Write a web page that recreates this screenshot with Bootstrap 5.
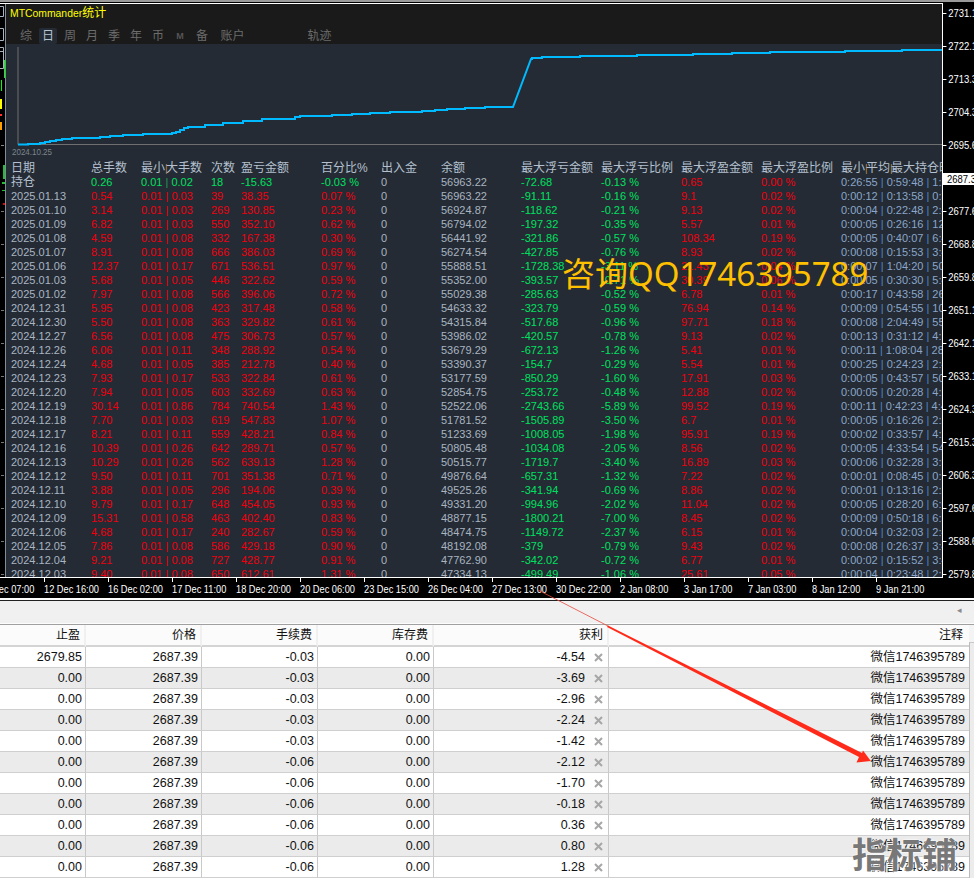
<!DOCTYPE html>
<html lang="zh">
<head>
<meta charset="utf-8">
<title>MTCommander统计</title>
<link href="https://cdn.jsdelivr.net/npm/bootstrap@5.3.0/dist/css/bootstrap.min.css" rel="stylesheet">
<style>
html,body{margin:0;height:878px;overflow:hidden;background:#000}
body{font-family:"Liberation Sans","Noto Sans CJK SC",sans-serif;width:974px;position:relative}
.topline{height:3px;background:#000;border-top:2px solid #9a9a9a}
.chart-row{height:575px}
.plot{width:943px;border-top:1px solid #fff;border-right:1px solid #fff;border-bottom:1px solid #fff;min-width:0}
.strip{width:5px;flex:none;background:#000;overflow:hidden}
.panel{width:937px;border-left:1px solid #7f8c9a;background:#242b34;min-width:0}
.titlebar{height:40px;background:#1a1a1a;padding:2px 0 0 4px;flex:none}
.ttl{color:#ff0;font-size:10.4px;line-height:15px;height:22px}
.ttl span{font-size:12px}
.tabbar{padding-left:5px;color:#6c6c6c;font-size:12px;line-height:16px;height:16px}
.tabx{width:22px;text-align:center;flex:none}
.tabx.on{background:#242b34;color:#b9c4d2;width:18px;margin:0 2px;border-radius:2px}
.tabx.mm{font-size:9px;font-weight:700;color:#555}
.tabx.wide{width:25px;margin-left:7px;margin-right:62px;white-space:nowrap}
.tabx.wide2{width:25px;white-space:nowrap}
.curve{height:117px;flex:none;display:block}
.tblwrap{flex:1;overflow:hidden;min-height:0}
.stat-tbl{table-layout:fixed;width:936px;margin:0;--bs-table-bg:transparent;border-collapse:separate;border-spacing:0}
.stat-tbl td,.stat-tbl th{padding:0;height:14px;line-height:14px;font-size:11px;white-space:nowrap;overflow:hidden;border:0;background:transparent;box-shadow:none;color:#a9b4c0;font-weight:400}
.stat-tbl th{font-size:12px;color:#b4c0cf;line-height:13px}
.stat-tbl td:first-child,.stat-tbl th:first-child{padding-left:5px}
.stat-tbl tbody td:first-child{color:#aab5c2}
.stat-tbl tbody tr.cur td:first-child{font-size:12px;color:#b4c0cf}
.stat-tbl td.rd{color:#f0000f}
.stat-tbl td.gr{color:#00e060}
.stat-tbl td.tm{color:#8ba6c9}
.sep{color:#4f86c6}
.stat-tbl td.rd .sep{color:#f0000f}
.stat-tbl td.gr .sep{color:#1f9e55}
.hsep{color:#b08a50;display:inline-block;width:1px;font-size:10px}
.axis{width:31px;flex:none;color:#fff;font-size:11px;overflow:hidden;margin-top:-4px;position:relative;height:579px}
.pr{height:33px;line-height:33px;padding-left:6px;position:relative;white-space:nowrap;transform:scaleX(.86);transform-origin:left center}
.pr::before{content:"";position:absolute;left:0;top:16px;width:4px;height:1px;background:#fff}
.pr.none::before{display:none}
.nowpr{position:absolute;left:0;top:174px;width:31px;height:12px;background:#fff;color:#000;font-size:11px;line-height:12px;padding-left:4px;white-space:nowrap;overflow:hidden}
.nowpr span{display:inline-block;transform:scaleX(.86);transform-origin:left center}
.timeline{height:20px;overflow:hidden;color:#fff;font-size:11px;line-height:20px;padding-top:1px;margin-left:-20px;width:994px}
.tick{width:64px;flex:none;position:relative;white-space:nowrap;line-height:14px;padding-top:3px}
.tick::before{content:"";position:absolute;left:0;top:-1px;width:1px;height:4px;background:#fff}
.tick span{display:inline-block;transform:scaleX(.84);transform-origin:left center}
.wline{height:2px;background:#fff}
.bline{height:1px;background:#222}
.toolbar{height:23px;background:#f0f0f0;border-bottom:1px solid #fcfcfc;padding-right:12px;color:#8a8a8a;font-size:9px;line-height:18px;text-align:right;flex:none}
.gline{height:1px;background:#a0a0a0}
.lower{background:#f0f0f0;height:253px}
.order-tbl{table-layout:fixed;width:969px;margin:0;border-collapse:separate;border-spacing:0;flex:none}
.order-tbl th,.order-tbl td{height:21px;padding:0 3px;font-size:12.5px;line-height:20px;text-align:right;color:#111;white-space:nowrap;overflow:hidden;border:0;border-right:1px solid #c9c9c9;border-bottom:1px solid #cfcfcf;background:#fff;box-shadow:none;font-weight:400}
.order-tbl th{font-size:12px;background:#fbfbfb;border-right:2px solid #f0f0f0;border-bottom:2px solid #d4d4d4;padding-right:4px;height:22px}
.order-tbl th:last-child,.order-tbl td:last-child{border-right:0;padding-right:4px}
.order-tbl th:last-child{padding-right:6px}
.order-tbl tbody tr:nth-child(even) td{background:#ebebeb}
.order-tbl td.pf{padding-right:5px}
.xic{width:9px;height:9px;margin-left:9px;vertical-align:-1px}
.sbar{flex:1;background:#f4f4f4}
.sbar-thumb{margin-top:17px;height:236px;background:#ececec;border-left:1px solid #bcbcbc;border-top:1px solid #c8c8c8}
.qqmark{position:absolute;left:562px;top:249px;font-size:33px;line-height:50px;color:#ffc000;font-family:"Noto Sans","Noto Sans CJK SC",sans-serif;white-space:nowrap}
.brandmark{position:absolute;left:852px;top:832px;font-size:35px;line-height:42px;font-weight:700;color:#787878;font-family:"Noto Sans CJK SC",sans-serif;white-space:nowrap;text-shadow:0 0 2px #fff,0 0 2px #fff}
.arrowlay{position:absolute;left:0;top:0;width:974px;height:878px;pointer-events:none}
</style>
</head>
<body>
<div class="topline"></div>
<div class="d-flex chart-row">
  <div class="plot d-flex">
    <div class="strip">
      <svg width="5" height="573" viewBox="0 0 5 573" class="d-block">
        <g fill="none" stroke="#aab4c0"><path d="M-1 2.5H3.5V12.5H-1M-1 24.5H3.5V36.5H-1M-1 43.5H3.5V64.5H-1M-1 47.5H3.5"/></g>
        <rect x="4" y="56" width="1" height="18" fill="#00ff00"/>
        <rect x="1" y="76" width="1" height="11" fill="#00ff00"/>
        <rect x="0" y="95" width="2" height="10" fill="#ffff00"/>
        <rect x="0" y="110" width="2" height="2" fill="#ff3030"/>
        <rect x="0" y="118" width="2" height="8" fill="#ffa000"/>
        <rect x="1" y="141" width="3" height="1" fill="#888"/>
        <rect x="3" y="161" width="2" height="14" fill="#20c030"/>
        <rect x="2" y="178" width="3" height="2" fill="#20c030"/>
        <rect x="2" y="186" width="3" height="1" fill="#20c030"/>
        <rect x="3" y="199" width="2" height="2" fill="#f00000"/>
        <g fill="#777"><rect x="1" y="207" width="3" height="1"/><rect x="1" y="240" width="3" height="1"/><rect x="1" y="273" width="3" height="1"/><rect x="1" y="306" width="3" height="1"/><rect x="1" y="339" width="3" height="1"/><rect x="1" y="372" width="3" height="1"/><rect x="1" y="405" width="3" height="1"/><rect x="1" y="438" width="3" height="1"/><rect x="1" y="471" width="3" height="1"/><rect x="1" y="504" width="3" height="1"/><rect x="1" y="537" width="3" height="1"/><rect x="1" y="570" width="3" height="1"/></g>
      </svg>
    </div>
    <div class="panel d-flex flex-column">
      <div class="titlebar">
        <div class="ttl">MTCommander<span>统计</span></div>
        <div class="tabbar d-flex">
          <span class="tabx">综</span><span class="tabx on">日</span><span class="tabx">周</span><span class="tabx">月</span><span class="tabx">季</span><span class="tabx">年</span><span class="tabx">币</span><span class="tabx mm">M</span><span class="tabx">备</span><span class="tabx wide">账户</span><span class="tabx wide2">轨迹</span>
        </div>
      </div>
      <svg class="curve" width="936" height="117" viewBox="6 44 936 117">
        <path d="M18 47V144.5H942" fill="none" stroke="#6f6f6f" stroke-width="1"/>
        <path d="M18 144.5H28V144H40V143H45V142H50V141H56V140H62V139H72V138H100V137H110V136H123V135H143V134H172V133H176V132H180V130H184V128H188V127H205V125H223V123H243V121H262V119H295V117H300V116H332V115H352V114H370V113H390V112H422V111H435V110H447V109H465V108H485V107H513L531 59H532V58H542V57H580V56H637V55H693V54H732V53H770V52H845V51H902V50H942" fill="none" stroke="#00baff" stroke-width="2"/>
        <text x="12" y="155" fill="#7d858e" font-size="9.5" font-family="Liberation Sans" textLength="40" lengthAdjust="spacingAndGlyphs">2024.10.25</text>
      </svg>
      <div class="tblwrap">
        <table class="table stat-tbl">
          <colgroup><col style="width:85px"><col style="width:50px"><col style="width:70px"><col style="width:30px"><col style="width:80px"><col style="width:60px"><col style="width:60px"><col style="width:80px"><col style="width:80px"><col style="width:80px"><col style="width:80px"><col style="width:80px"><col style="width:101px"></colgroup>
          <thead><tr><th>日期</th><th>总手数</th><th>最小<span class="hsep">|</span>大手数</th><th>次数</th><th>盈亏金额</th><th>百分比%</th><th>出入金</th><th>余额</th><th>最大浮亏金额</th><th>最大浮亏比例</th><th>最大浮盈金额</th><th>最大浮盈比例</th><th>最小<span class="hsep">|</span>平均<span class="hsep">|</span>最大持仓时间</th></tr></thead>
          <tbody>
<tr class="cur"><td>持仓</td><td class="gr">0.26</td><td class="gr">0.01 <span class="sep">|</span> 0.02</td><td class="gr">18</td><td class="gr">-15.63</td><td class="gr">-0.03 %</td><td>0</td><td>56963.22</td><td class="gr">-72.68</td><td class="gr">-0.13 %</td><td class="rd">0.65</td><td class="rd">0.00 %</td><td class="tm">0:26:55 <span class="sep">|</span> 0:59:48 <span class="sep">|</span> 1:2</td></tr>
<tr><td>2025.01.13</td><td class="rd">0.54</td><td class="rd">0.01 <span class="sep">|</span> 0.03</td><td class="rd">39</td><td class="rd">38.35</td><td class="rd">0.07 %</td><td>0</td><td>56963.22</td><td class="gr">-91.11</td><td class="gr">-0.16 %</td><td class="rd">9.1</td><td class="rd">0.02 %</td><td class="tm">0:00:12 <span class="sep">|</span> 0:13:58 <span class="sep">|</span> 0:3</td></tr>
<tr><td>2025.01.10</td><td class="rd">3.14</td><td class="rd">0.01 <span class="sep">|</span> 0.03</td><td class="rd">269</td><td class="rd">130.85</td><td class="rd">0.23 %</td><td>0</td><td>56924.87</td><td class="gr">-118.62</td><td class="gr">-0.21 %</td><td class="rd">9.13</td><td class="rd">0.02 %</td><td class="tm">0:00:04 <span class="sep">|</span> 0:22:48 <span class="sep">|</span> 2:4</td></tr>
<tr><td>2025.01.09</td><td class="rd">6.82</td><td class="rd">0.01 <span class="sep">|</span> 0.03</td><td class="rd">550</td><td class="rd">352.10</td><td class="rd">0.62 %</td><td>0</td><td>56794.02</td><td class="gr">-197.32</td><td class="gr">-0.35 %</td><td class="rd">5.57</td><td class="rd">0.01 %</td><td class="tm">0:00:05 <span class="sep">|</span> 0:26:16 <span class="sep">|</span> 12</td></tr>
<tr><td>2025.01.08</td><td class="rd">4.59</td><td class="rd">0.01 <span class="sep">|</span> 0.08</td><td class="rd">332</td><td class="rd">167.38</td><td class="rd">0.30 %</td><td>0</td><td>56441.92</td><td class="gr">-321.86</td><td class="gr">-0.57 %</td><td class="rd">108.34</td><td class="rd">0.19 %</td><td class="tm">0:00:05 <span class="sep">|</span> 0:40:07 <span class="sep">|</span> 6:4</td></tr>
<tr><td>2025.01.07</td><td class="rd">8.91</td><td class="rd">0.01 <span class="sep">|</span> 0.08</td><td class="rd">666</td><td class="rd">386.03</td><td class="rd">0.69 %</td><td>0</td><td>56274.54</td><td class="gr">-427.85</td><td class="gr">-0.76 %</td><td class="rd">8.93</td><td class="rd">0.02 %</td><td class="tm">0:00:08 <span class="sep">|</span> 0:15:53 <span class="sep">|</span> 3:4</td></tr>
<tr><td>2025.01.06</td><td class="rd">12.37</td><td class="rd">0.01 <span class="sep">|</span> 0.17</td><td class="rd">671</td><td class="rd">536.51</td><td class="rd">0.97 %</td><td>0</td><td>55888.51</td><td class="gr">-1728.38</td><td class="gr">-3.11 %</td><td class="rd">21.43</td><td class="rd">0.04 %</td><td class="tm">0:00:07 <span class="sep">|</span> 1:04:20 <span class="sep">|</span> 50</td></tr>
<tr><td>2025.01.03</td><td class="rd">5.68</td><td class="rd">0.01 <span class="sep">|</span> 0.05</td><td class="rd">446</td><td class="rd">322.62</td><td class="rd">0.59 %</td><td>0</td><td>55352.00</td><td class="gr">-393.57</td><td class="gr">-0.71 %</td><td class="rd">30.39</td><td class="rd">0.06 %</td><td class="tm">0:00:05 <span class="sep">|</span> 0:30:30 <span class="sep">|</span> 5:4</td></tr>
<tr><td>2025.01.02</td><td class="rd">7.97</td><td class="rd">0.01 <span class="sep">|</span> 0.08</td><td class="rd">566</td><td class="rd">396.06</td><td class="rd">0.72 %</td><td>0</td><td>55029.38</td><td class="gr">-285.63</td><td class="gr">-0.52 %</td><td class="rd">6.78</td><td class="rd">0.01 %</td><td class="tm">0:00:17 <span class="sep">|</span> 0:43:58 <span class="sep">|</span> 26</td></tr>
<tr><td>2024.12.31</td><td class="rd">5.95</td><td class="rd">0.01 <span class="sep">|</span> 0.08</td><td class="rd">423</td><td class="rd">317.48</td><td class="rd">0.58 %</td><td>0</td><td>54633.32</td><td class="gr">-323.79</td><td class="gr">-0.59 %</td><td class="rd">76.94</td><td class="rd">0.14 %</td><td class="tm">0:00:09 <span class="sep">|</span> 0:54:55 <span class="sep">|</span> 10</td></tr>
<tr><td>2024.12.30</td><td class="rd">5.50</td><td class="rd">0.01 <span class="sep">|</span> 0.08</td><td class="rd">363</td><td class="rd">329.82</td><td class="rd">0.61 %</td><td>0</td><td>54315.84</td><td class="gr">-517.68</td><td class="gr">-0.96 %</td><td class="rd">97.71</td><td class="rd">0.18 %</td><td class="tm">0:00:08 <span class="sep">|</span> 2:04:49 <span class="sep">|</span> 55</td></tr>
<tr><td>2024.12.27</td><td class="rd">6.56</td><td class="rd">0.01 <span class="sep">|</span> 0.08</td><td class="rd">475</td><td class="rd">306.73</td><td class="rd">0.57 %</td><td>0</td><td>53986.02</td><td class="gr">-420.57</td><td class="gr">-0.78 %</td><td class="rd">9.13</td><td class="rd">0.02 %</td><td class="tm">0:00:13 <span class="sep">|</span> 0:31:12 <span class="sep">|</span> 4:1</td></tr>
<tr><td>2024.12.26</td><td class="rd">6.06</td><td class="rd">0.01 <span class="sep">|</span> 0.11</td><td class="rd">348</td><td class="rd">288.92</td><td class="rd">0.54 %</td><td>0</td><td>53679.29</td><td class="gr">-672.13</td><td class="gr">-1.26 %</td><td class="rd">5.41</td><td class="rd">0.01 %</td><td class="tm">0:00:11 <span class="sep">|</span> 1:08:04 <span class="sep">|</span> 28</td></tr>
<tr><td>2024.12.24</td><td class="rd">4.68</td><td class="rd">0.01 <span class="sep">|</span> 0.05</td><td class="rd">385</td><td class="rd">212.78</td><td class="rd">0.40 %</td><td>0</td><td>53390.37</td><td class="gr">-154.7</td><td class="gr">-0.29 %</td><td class="rd">5.54</td><td class="rd">0.01 %</td><td class="tm">0:00:25 <span class="sep">|</span> 0:24:23 <span class="sep">|</span> 2:4</td></tr>
<tr><td>2024.12.23</td><td class="rd">7.93</td><td class="rd">0.01 <span class="sep">|</span> 0.17</td><td class="rd">533</td><td class="rd">322.84</td><td class="rd">0.61 %</td><td>0</td><td>53177.59</td><td class="gr">-850.29</td><td class="gr">-1.60 %</td><td class="rd">17.91</td><td class="rd">0.03 %</td><td class="tm">0:00:05 <span class="sep">|</span> 0:43:57 <span class="sep">|</span> 50</td></tr>
<tr><td>2024.12.20</td><td class="rd">7.94</td><td class="rd">0.01 <span class="sep">|</span> 0.05</td><td class="rd">603</td><td class="rd">332.69</td><td class="rd">0.63 %</td><td>0</td><td>52854.75</td><td class="gr">-253.72</td><td class="gr">-0.48 %</td><td class="rd">12.88</td><td class="rd">0.02 %</td><td class="tm">0:00:05 <span class="sep">|</span> 0:20:28 <span class="sep">|</span> 4:2</td></tr>
<tr><td>2024.12.19</td><td class="rd">30.14</td><td class="rd">0.01 <span class="sep">|</span> 0.86</td><td class="rd">784</td><td class="rd">740.54</td><td class="rd">1.43 %</td><td>0</td><td>52522.06</td><td class="gr">-2743.66</td><td class="gr">-5.89 %</td><td class="rd">99.52</td><td class="rd">0.19 %</td><td class="tm">0:00:11 <span class="sep">|</span> 0:42:23 <span class="sep">|</span> 4:4</td></tr>
<tr><td>2024.12.18</td><td class="rd">7.70</td><td class="rd">0.01 <span class="sep">|</span> 0.03</td><td class="rd">619</td><td class="rd">547.83</td><td class="rd">1.07 %</td><td>0</td><td>51781.52</td><td class="gr">-1505.89</td><td class="gr">-3.50 %</td><td class="rd">6.7</td><td class="rd">0.01 %</td><td class="tm">0:00:05 <span class="sep">|</span> 0:16:26 <span class="sep">|</span> 2:2</td></tr>
<tr><td>2024.12.17</td><td class="rd">8.21</td><td class="rd">0.01 <span class="sep">|</span> 0.11</td><td class="rd">559</td><td class="rd">428.21</td><td class="rd">0.84 %</td><td>0</td><td>51233.69</td><td class="gr">-1008.05</td><td class="gr">-1.98 %</td><td class="rd">95.91</td><td class="rd">0.19 %</td><td class="tm">0:00:02 <span class="sep">|</span> 0:33:57 <span class="sep">|</span> 4:2</td></tr>
<tr><td>2024.12.16</td><td class="rd">10.39</td><td class="rd">0.01 <span class="sep">|</span> 0.26</td><td class="rd">642</td><td class="rd">289.71</td><td class="rd">0.57 %</td><td>0</td><td>50805.48</td><td class="gr">-1034.08</td><td class="gr">-2.05 %</td><td class="rd">8.56</td><td class="rd">0.02 %</td><td class="tm">0:00:05 <span class="sep">|</span> 4:33:54 <span class="sep">|</span> 54</td></tr>
<tr><td>2024.12.13</td><td class="rd">10.29</td><td class="rd">0.01 <span class="sep">|</span> 0.26</td><td class="rd">562</td><td class="rd">639.13</td><td class="rd">1.28 %</td><td>0</td><td>50515.77</td><td class="gr">-1719.7</td><td class="gr">-3.40 %</td><td class="rd">16.89</td><td class="rd">0.03 %</td><td class="tm">0:00:06 <span class="sep">|</span> 0:32:28 <span class="sep">|</span> 3:3</td></tr>
<tr><td>2024.12.12</td><td class="rd">9.50</td><td class="rd">0.01 <span class="sep">|</span> 0.11</td><td class="rd">701</td><td class="rd">351.38</td><td class="rd">0.71 %</td><td>0</td><td>49876.64</td><td class="gr">-657.31</td><td class="gr">-1.32 %</td><td class="rd">7.22</td><td class="rd">0.02 %</td><td class="tm">0:00:01 <span class="sep">|</span> 0:08:45 <span class="sep">|</span> 0:5</td></tr>
<tr><td>2024.12.11</td><td class="rd">3.88</td><td class="rd">0.01 <span class="sep">|</span> 0.05</td><td class="rd">296</td><td class="rd">194.06</td><td class="rd">0.39 %</td><td>0</td><td>49525.26</td><td class="gr">-341.94</td><td class="gr">-0.69 %</td><td class="rd">8.86</td><td class="rd">0.02 %</td><td class="tm">0:00:01 <span class="sep">|</span> 0:13:16 <span class="sep">|</span> 2:2</td></tr>
<tr><td>2024.12.10</td><td class="rd">9.79</td><td class="rd">0.01 <span class="sep">|</span> 0.17</td><td class="rd">648</td><td class="rd">454.05</td><td class="rd">0.93 %</td><td>0</td><td>49331.20</td><td class="gr">-994.96</td><td class="gr">-2.02 %</td><td class="rd">11.04</td><td class="rd">0.02 %</td><td class="tm">0:00:05 <span class="sep">|</span> 0:28:20 <span class="sep">|</span> 6:0</td></tr>
<tr><td>2024.12.09</td><td class="rd">15.31</td><td class="rd">0.01 <span class="sep">|</span> 0.58</td><td class="rd">463</td><td class="rd">402.40</td><td class="rd">0.83 %</td><td>0</td><td>48877.15</td><td class="gr">-1800.21</td><td class="gr">-7.00 %</td><td class="rd">8.45</td><td class="rd">0.02 %</td><td class="tm">0:00:09 <span class="sep">|</span> 0:50:18 <span class="sep">|</span> 6:5</td></tr>
<tr><td>2024.12.06</td><td class="rd">4.68</td><td class="rd">0.01 <span class="sep">|</span> 0.17</td><td class="rd">240</td><td class="rd">282.67</td><td class="rd">0.59 %</td><td>0</td><td>48474.75</td><td class="gr">-1149.72</td><td class="gr">-2.37 %</td><td class="rd">6.15</td><td class="rd">0.01 %</td><td class="tm">0:00:04 <span class="sep">|</span> 0:32:03 <span class="sep">|</span> 2:4</td></tr>
<tr><td>2024.12.05</td><td class="rd">7.86</td><td class="rd">0.01 <span class="sep">|</span> 0.08</td><td class="rd">586</td><td class="rd">429.18</td><td class="rd">0.90 %</td><td>0</td><td>48192.08</td><td class="gr">-379</td><td class="gr">-0.79 %</td><td class="rd">9.43</td><td class="rd">0.02 %</td><td class="tm">0:00:08 <span class="sep">|</span> 0:26:37 <span class="sep">|</span> 3:4</td></tr>
<tr><td>2024.12.04</td><td class="rd">9.21</td><td class="rd">0.01 <span class="sep">|</span> 0.08</td><td class="rd">727</td><td class="rd">428.77</td><td class="rd">0.91 %</td><td>0</td><td>47762.90</td><td class="gr">-342.02</td><td class="gr">-0.72 %</td><td class="rd">6.77</td><td class="rd">0.01 %</td><td class="tm">0:00:02 <span class="sep">|</span> 0:15:52 <span class="sep">|</span> 3:4</td></tr>
<tr><td>2024.12.03</td><td class="rd">9.40</td><td class="rd">0.01 <span class="sep">|</span> 0.08</td><td class="rd">650</td><td class="rd">612.61</td><td class="rd">1.31 %</td><td>0</td><td>47334.13</td><td class="gr">-499.49</td><td class="gr">-1.06 %</td><td class="rd">25.61</td><td class="rd">0.05 %</td><td class="tm">0:00:04 <span class="sep">|</span> 0:23:48 <span class="sep">|</span> 2:5</td></tr>
          </tbody>
        </table>
      </div>
    </div>
  </div>
  <div class="axis">
    <div class="pr" style="margin-top:-2px">2731.15</div><div class="pr">2722.15</div><div class="pr">2713.35</div><div class="pr">2704.35</div><div class="pr">2695.65</div><div class="pr none"></div><div class="pr">2677.65</div><div class="pr">2668.85</div><div class="pr">2659.85</div><div class="pr">2651.15</div><div class="pr">2642.15</div><div class="pr">2633.15</div><div class="pr">2624.35</div><div class="pr">2615.35</div><div class="pr">2606.35</div><div class="pr">2597.65</div><div class="pr">2588.65</div><div class="pr">2579.85</div>
    <div class="nowpr"><span>2687.39</span></div>
  </div>
</div>
<div class="timeline d-flex">
  <div class="tick"><span>11 Dec 07:00</span></div><div class="tick"><span>12 Dec 16:00</span></div><div class="tick"><span>16 Dec 02:00</span></div><div class="tick"><span>17 Dec 11:00</span></div><div class="tick"><span>18 Dec 20:00</span></div><div class="tick"><span>20 Dec 06:00</span></div><div class="tick"><span>23 Dec 15:00</span></div><div class="tick"><span>26 Dec 04:00</span></div><div class="tick"><span>27 Dec 13:00</span></div><div class="tick"><span>30 Dec 22:00</span></div><div class="tick"><span>2 Jan 08:00</span></div><div class="tick"><span>3 Jan 17:00</span></div><div class="tick"><span>7 Jan 03:00</span></div><div class="tick"><span>8 Jan 12:00</span></div><div class="tick"><span>9 Jan 21:00</span></div>
</div>
<div class="wline"></div>
<div class="bline"></div>
<div class="toolbar">◂</div>
<div class="gline"></div>
<div class="lower d-flex">
  <table class="table order-tbl">
    <colgroup><col style="width:86px"><col style="width:116px"><col style="width:116px"><col style="width:116px"><col style="width:175px"><col style="width:360px"></colgroup>
    <thead><tr><th>止盈</th><th>价格</th><th>手续费</th><th>库存费</th><th>获利</th><th>注释</th></tr></thead>
    <tbody>
<tr><td>2679.85</td><td>2687.39</td><td>-0.03</td><td>0.00</td><td class="pf">-4.54<svg class="xic" viewBox="0 0 9 9"><path d="M1 1L8 8M8 1L1 8" stroke="#a6a6a6" stroke-width="2"/></svg></td><td>微信1746395789</td></tr>
<tr><td>0.00</td><td>2687.39</td><td>-0.03</td><td>0.00</td><td class="pf">-3.69<svg class="xic" viewBox="0 0 9 9"><path d="M1 1L8 8M8 1L1 8" stroke="#a6a6a6" stroke-width="2"/></svg></td><td>微信1746395789</td></tr>
<tr><td>0.00</td><td>2687.39</td><td>-0.03</td><td>0.00</td><td class="pf">-2.96<svg class="xic" viewBox="0 0 9 9"><path d="M1 1L8 8M8 1L1 8" stroke="#a6a6a6" stroke-width="2"/></svg></td><td>微信1746395789</td></tr>
<tr><td>0.00</td><td>2687.39</td><td>-0.03</td><td>0.00</td><td class="pf">-2.24<svg class="xic" viewBox="0 0 9 9"><path d="M1 1L8 8M8 1L1 8" stroke="#a6a6a6" stroke-width="2"/></svg></td><td>微信1746395789</td></tr>
<tr><td>0.00</td><td>2687.39</td><td>-0.03</td><td>0.00</td><td class="pf">-1.42<svg class="xic" viewBox="0 0 9 9"><path d="M1 1L8 8M8 1L1 8" stroke="#a6a6a6" stroke-width="2"/></svg></td><td>微信1746395789</td></tr>
<tr><td>0.00</td><td>2687.39</td><td>-0.06</td><td>0.00</td><td class="pf">-2.12<svg class="xic" viewBox="0 0 9 9"><path d="M1 1L8 8M8 1L1 8" stroke="#a6a6a6" stroke-width="2"/></svg></td><td>微信1746395789</td></tr>
<tr><td>0.00</td><td>2687.39</td><td>-0.06</td><td>0.00</td><td class="pf">-1.70<svg class="xic" viewBox="0 0 9 9"><path d="M1 1L8 8M8 1L1 8" stroke="#a6a6a6" stroke-width="2"/></svg></td><td>微信1746395789</td></tr>
<tr><td>0.00</td><td>2687.39</td><td>-0.06</td><td>0.00</td><td class="pf">-0.18<svg class="xic" viewBox="0 0 9 9"><path d="M1 1L8 8M8 1L1 8" stroke="#a6a6a6" stroke-width="2"/></svg></td><td>微信1746395789</td></tr>
<tr><td>0.00</td><td>2687.39</td><td>-0.06</td><td>0.00</td><td class="pf">0.36<svg class="xic" viewBox="0 0 9 9"><path d="M1 1L8 8M8 1L1 8" stroke="#a6a6a6" stroke-width="2"/></svg></td><td>微信1746395789</td></tr>
<tr><td>0.00</td><td>2687.39</td><td>-0.06</td><td>0.00</td><td class="pf">0.80<svg class="xic" viewBox="0 0 9 9"><path d="M1 1L8 8M8 1L1 8" stroke="#a6a6a6" stroke-width="2"/></svg></td><td>微信1746395789</td></tr>
<tr><td>0.00</td><td>2687.39</td><td>-0.06</td><td>0.00</td><td class="pf">1.28<svg class="xic" viewBox="0 0 9 9"><path d="M1 1L8 8M8 1L1 8" stroke="#a6a6a6" stroke-width="2"/></svg></td><td>微信1746395789</td></tr>
    </tbody>
  </table>
  <div class="sbar"><div class="sbar-thumb"></div></div>
</div>
<div class="qqmark">咨询QQ1746395789</div>
<svg class="arrowlay" viewBox="0 0 974 878">
  <path d="M538 590L608 626" stroke="#e8473c" stroke-width=".8" fill="none"/>
  <polygon points="608,625.6 862,753 863,750.5 870.8,761 856.5,762.5 859,757 607,627" fill="#ff2a1a"/>
</svg>
<div class="brandmark">指标铺</div>
</body>
</html>
